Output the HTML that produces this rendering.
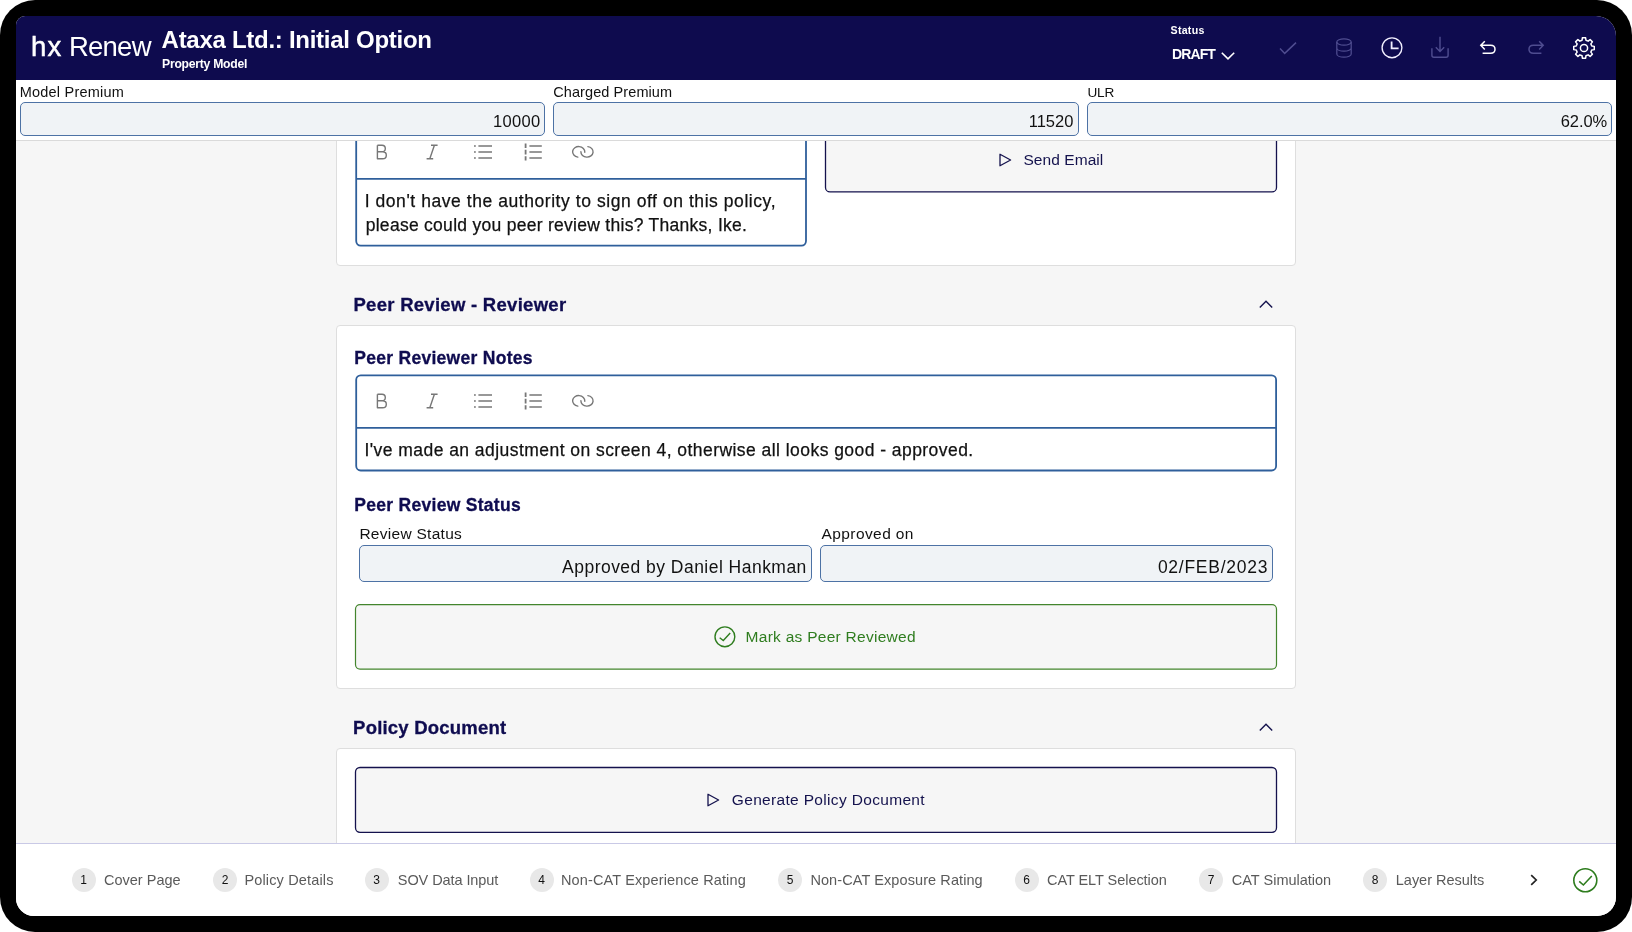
<!DOCTYPE html>
<html lang="en">
<head>
<meta charset="utf-8">
<title>hx Renew - Ataxa Ltd.: Initial Option</title>
<style>
*{box-sizing:border-box;margin:0;padding:0}
html,body{width:1632px;height:932px;overflow:hidden;background:#fff}
body{font-family:"Liberation Sans",sans-serif;color:#000;position:relative}
.frame{position:absolute;left:0;top:0;width:1632px;height:932px;background:#000;border-radius:35px}
.screen{position:absolute;left:16px;top:16px;width:1600px;height:900px;background:#f6f6f6;border-radius:9px 20px 19px 18px;overflow:hidden;will-change:transform}
.t{position:absolute;white-space:nowrap;line-height:1}
.os{-webkit-text-stroke:0.25px #111}
.lg{-webkit-text-stroke:0.5px #fff}
.hb{-webkit-text-stroke:0.3px #0f0c50}
.b{font-weight:bold}
.hdr{position:absolute;left:0;top:0;width:1600px;height:64px;background:#0e0b4e}
.prem{position:absolute;left:0;top:64px;width:1600px;height:61px;background:#fff;border-bottom:1px solid #dadada}
.inp{position:absolute;border:1px solid #4d72a5;border-radius:5px;background:#f0f3f6}
.card{position:absolute;left:320px;width:960px;background:#fff;border:1px solid #dedede;border-radius:4px}
.foot{position:absolute;left:0;top:827px;width:1600px;height:73px;background:#fff;border-top:1px solid #c9c9e6}
.st{position:absolute;top:852px;width:24px;height:24px;border-radius:12px;background:#e8e8e8}
.sn{position:absolute;width:24px;text-align:center;font-size:12px;line-height:1;color:#111;top:858px;white-space:nowrap}
svg{position:absolute;overflow:visible}
</style>
</head>
<body>
<div class="frame"></div>
<div class="screen">

<!-- content cards -->
<div class="card" style="top:60px;height:190px"></div>
<div class="card" style="top:309px;height:364px"></div>
<div class="card" style="top:732px;height:160px"></div>

<!-- editor 1 -->
<svg style="left:338px;top:108px" width="455" height="125" viewBox="0 0 455 125" fill="none"><rect x="2.20" y="2.40" width="449.80" height="119.20" rx="4.5" ry="4.5" stroke="#2f5f9b" stroke-width="1.8" fill="#fff"/><path d="M2.20 54.90H452.00" stroke="#2f5f9b" stroke-width="1.8"/></svg>
<svg style="left:360.0px;top:128.0px" width="12" height="16" viewBox="0 0 12 16" fill="none"><path d="M1.4 1.2V14.8H6.6C9 14.8 10.3 13.3 10.3 11.2C10.3 9.2 9 7.8 6.6 7.8H1.4M1.4 1.2H6C8 1.2 9.3 2.4 9.3 4.4C9.3 6.4 8 7.8 6 7.8" stroke="#777" stroke-width="1.4" stroke-linejoin="round"/></svg>
<svg style="left:410.0px;top:128.0px" width="12" height="16" viewBox="0 0 12 16" fill="none"><path d="M5 1.3H11.6M0.6 14.7H7.2M8.4 1.3L3.8 14.7" stroke="#777" stroke-width="1.4"/></svg>
<svg style="left:457.7px;top:128.0px" width="18" height="16" viewBox="0 0 18 16" fill="none"><path d="M4.4 2H18M4.4 8H18M4.4 14H18" stroke="#777" stroke-width="1.4"/><path d="M0 2H1.8M0 8H1.8M0 14H1.8" stroke="#777" stroke-width="1.4"/></svg>
<svg style="left:508.0px;top:127.0px" width="18" height="18" viewBox="0 0 18 18" fill="none"><path d="M5.4 3H17.8M5.4 9H17.8M5.4 15H17.8" stroke="#777" stroke-width="1.4"/><path d="M1.6 0.4V17.6" stroke="#777" stroke-width="1.8" stroke-dasharray="4.6 1.8"/></svg>
<svg style="left:556.0px;top:129.0px" width="22" height="14" viewBox="0 0 22 14" fill="none"><path d="M5.8 12.1A6.1 5.3 0 1 1 12.8 7.2M15.9 1.6A6.1 5.3 0 1 1 8.9 6.7" stroke="#777" stroke-width="1.4" stroke-linecap="round"/></svg>
<div class="t os" id="e1a" style="left:348.7px;top:177px;font-size:17.5px;color:#111;letter-spacing:0.56px">I don&#x27;t have the authority to sign off on this policy,</div>
<div class="t os" id="e1b" style="left:349.7px;top:201px;font-size:17.5px;color:#111;letter-spacing:0.28px">please could you peer review this? Thanks, Ike.</div>

<!-- send email -->
<svg style="left:807px;top:109px" width="457" height="70" viewBox="0 0 457 70" fill="none"><rect x="2.50" y="2.30" width="451.00" height="64.60" rx="4.5" ry="4.5" stroke="#14124d" stroke-width="1.3" fill="#f6f6f6"/></svg>
<svg style="left:983.0px;top:137.0px" width="13" height="14" viewBox="0 0 13 14" fill="none"><path d="M1 1.2V12.8L11.6 7Z" stroke="#14124d" stroke-width="1.3" stroke-linejoin="round"/></svg>
<div class="t" id="send" style="left:1007.4px;top:136px;font-size:15.5px;color:#14124d;letter-spacing:0.07px">Send Email</div>

<!-- section: peer review reviewer -->
<div class="t b hb" id="h1" style="left:337.5px;top:280px;font-size:18.5px;color:#0f0c50;letter-spacing:0.28px">Peer Review - Reviewer</div>
<svg style="left:1243.0px;top:284.0px" width="14" height="8" viewBox="0 0 14 8" fill="none"><path d="M0.8 7.4L7 1.2L13.2 7.4" stroke="#14124d" stroke-width="1.4"/></svg>
<div class="t b hb" id="h2" style="left:338.3px;top:334px;font-size:17.5px;color:#0f0c50;letter-spacing:0.28px">Peer Reviewer Notes</div>
<svg style="left:338px;top:357px" width="926" height="101" viewBox="0 0 926 101" fill="none"><rect x="2.20" y="2.30" width="919.90" height="95.20" rx="4.5" ry="4.5" stroke="#2f5f9b" stroke-width="1.8" fill="#fff"/><path d="M2.20 54.80H922.10" stroke="#2f5f9b" stroke-width="1.8"/></svg>
<svg style="left:360.0px;top:377.0px" width="12" height="16" viewBox="0 0 12 16" fill="none"><path d="M1.4 1.2V14.8H6.6C9 14.8 10.3 13.3 10.3 11.2C10.3 9.2 9 7.8 6.6 7.8H1.4M1.4 1.2H6C8 1.2 9.3 2.4 9.3 4.4C9.3 6.4 8 7.8 6 7.8" stroke="#777" stroke-width="1.4" stroke-linejoin="round"/></svg>
<svg style="left:410.0px;top:377.0px" width="12" height="16" viewBox="0 0 12 16" fill="none"><path d="M5 1.3H11.6M0.6 14.7H7.2M8.4 1.3L3.8 14.7" stroke="#777" stroke-width="1.4"/></svg>
<svg style="left:457.7px;top:377.0px" width="18" height="16" viewBox="0 0 18 16" fill="none"><path d="M4.4 2H18M4.4 8H18M4.4 14H18" stroke="#777" stroke-width="1.4"/><path d="M0 2H1.8M0 8H1.8M0 14H1.8" stroke="#777" stroke-width="1.4"/></svg>
<svg style="left:508.0px;top:376.0px" width="18" height="18" viewBox="0 0 18 18" fill="none"><path d="M5.4 3H17.8M5.4 9H17.8M5.4 15H17.8" stroke="#777" stroke-width="1.4"/><path d="M1.6 0.4V17.6" stroke="#777" stroke-width="1.8" stroke-dasharray="4.6 1.8"/></svg>
<svg style="left:556.0px;top:378.0px" width="22" height="14" viewBox="0 0 22 14" fill="none"><path d="M5.8 12.1A6.1 5.3 0 1 1 12.8 7.2M15.9 1.6A6.1 5.3 0 1 1 8.9 6.7" stroke="#777" stroke-width="1.4" stroke-linecap="round"/></svg>
<div class="t os" id="e2" style="left:348.5px;top:426px;font-size:17.5px;color:#111;letter-spacing:0.45px">I&#x27;ve made an adjustment on screen 4, otherwise all looks good - approved.</div>
<div class="t b hb" id="h3" style="left:338.3px;top:481px;font-size:17.5px;color:#0f0c50;letter-spacing:0.29px">Peer Review Status</div>
<div class="t" id="l4" style="left:343.4px;top:510px;font-size:15.5px;color:#111;letter-spacing:0.28px">Review Status</div>
<div class="t" id="l5" style="left:805.6px;top:510px;font-size:15.5px;color:#111;letter-spacing:0.40px">Approved on</div>
<div class="inp" style="left:343.0px;top:529.0px;width:453.0px;height:37.0px"></div>
<div class="inp" style="left:804.0px;top:529.0px;width:453.0px;height:37.0px"></div>
<div class="t" id="v4" style="left:546.1px;top:543px;font-size:17.5px;color:#111;letter-spacing:0.47px">Approved by Daniel Hankman</div>
<div class="t" id="v5" style="left:1141.9px;top:543px;font-size:17.5px;color:#111;letter-spacing:0.74px">02/FEB/2023</div>
<svg style="left:337px;top:586px" width="927" height="71" viewBox="0 0 927 71" fill="none"><rect x="2.50" y="2.60" width="921.00" height="64.50" rx="4.5" ry="4.5" stroke="#43852d" stroke-width="1.2" fill="#f6f6f6"/></svg>
<svg style="left:698.2px;top:610px" width="22" height="22" viewBox="0 0 22 22" fill="none"><circle cx="10.9" cy="10.8" r="9.9" stroke="#2f7d1f" stroke-width="1.4"/><path d="M5.7 11.8L9.3 14.5L16.2 7" stroke="#2f7d1f" stroke-width="1.4"/></svg>
<div class="t" id="mark" style="left:729.6px;top:613px;font-size:15.5px;color:#2f7d1f;letter-spacing:0.27px">Mark as Peer Reviewed</div>

<!-- section: policy document -->
<div class="t b hb" id="h4" style="left:337.1px;top:703px;font-size:18.5px;color:#0f0c50;letter-spacing:0.21px">Policy Document</div>
<svg style="left:1243.0px;top:707.0px" width="14" height="8" viewBox="0 0 14 8" fill="none"><path d="M0.8 7.4L7 1.2L13.2 7.4" stroke="#14124d" stroke-width="1.4"/></svg>
<svg style="left:337px;top:749px" width="927" height="71" viewBox="0 0 927 71" fill="none"><rect x="2.50" y="2.50" width="921.00" height="64.80" rx="4.5" ry="4.5" stroke="#14124d" stroke-width="1.3" fill="#f6f6f6"/></svg>
<svg style="left:691.0px;top:777.0px" width="13" height="14" viewBox="0 0 13 14" fill="none"><path d="M1 1.2V12.8L11.6 7Z" stroke="#14124d" stroke-width="1.3" stroke-linejoin="round"/></svg>
<div class="t" id="gen" style="left:715.8px;top:776px;font-size:15.5px;color:#14124d;letter-spacing:0.33px">Generate Policy Document</div>

<!-- PREMIUM ROW -->
<div class="prem"></div>
<div class="t" id="l1" style="left:3.8px;top:69px;font-size:14.5px;color:#111;letter-spacing:0.20px">Model Premium</div>
<div class="t" id="l2" style="left:537.2px;top:69px;font-size:14.5px;color:#111;letter-spacing:0.09px">Charged Premium</div>
<div class="t" id="l3" style="left:1071.5px;top:70px;font-size:13.6px;color:#111;letter-spacing:-0.25px">ULR</div>
<div class="inp" style="left:4.0px;top:86.0px;width:525.0px;height:34.0px"></div>
<div class="inp" style="left:537.0px;top:86.0px;width:526.0px;height:34.0px"></div>
<div class="inp" style="left:1071.0px;top:86.0px;width:525.0px;height:34.0px"></div>
<div class="t" id="v1" style="left:476.9px;top:97px;font-size:16.5px;color:#111;letter-spacing:0.35px">10000</div>
<div class="t" id="v2" style="left:1012.7px;top:97px;font-size:16.5px;color:#111;letter-spacing:0.00px">11520</div>
<div class="t" id="v3" style="left:1544.7px;top:97px;font-size:16.5px;color:#111;letter-spacing:-0.05px">62.0%</div>

<!-- HEADER -->
<div class="hdr"></div>
<div class="t lg" id="logo" style="left:15.1px;top:17px;font-size:27.5px;color:#fff;letter-spacing:1.20px">hx</div>
<div class="t" id="logo2" style="left:52.9px;top:17px;font-size:27.5px;color:#fff;letter-spacing:-0.75px">Renew</div>
<div class="t b" id="title" style="left:145.6px;top:12px;font-size:24px;color:#fff;letter-spacing:-0.28px">Ataxa Ltd.: Initial Option</div>
<div class="t b" id="sub" style="left:146.1px;top:42px;font-size:12.2px;color:#fff;letter-spacing:-0.27px">Property Model</div>
<div class="t b" id="status" style="left:1154.6px;top:9px;font-size:10.6px;color:#fff;letter-spacing:0.26px">Status</div>
<div class="t b" id="draft" style="left:1156.0px;top:31px;font-size:14px;color:#fff;letter-spacing:-0.90px">DRAFT</div>
<svg style="left:1205.0px;top:36.0px" width="14" height="8" viewBox="0 0 14 8" fill="none"><path d="M0.8 0.8L7 6.8L13.2 0.8" stroke="#fff" stroke-width="1.6"/></svg>
<svg style="left:1263.0px;top:25.0px" width="18" height="14" viewBox="0 0 18 14" fill="none"><path d="M1 7.6L5.7 12.4L17 1.6" stroke="#4f4d90" stroke-width="1.5"/></svg>
<svg style="left:1320.0px;top:22.0px" width="16" height="20" viewBox="0 0 16 20" fill="none"><ellipse cx="8" cy="4" rx="7.2" ry="3.2" stroke="#4f4d90" stroke-width="1.25"/><path d="M0.8 4V16C0.8 17.8 4 19.2 8 19.2C12 19.2 15.2 17.8 15.2 16V4M0.8 10C0.8 11.8 4 13.2 8 13.2C12 13.2 15.2 11.8 15.2 10" stroke="#4f4d90" stroke-width="1.25"/></svg>
<svg style="left:1365.0px;top:21.0px" width="22" height="22" viewBox="0 0 22 22" fill="none"><circle cx="11" cy="10.8" r="9.9" stroke="#f2f0ff" stroke-width="1.35"/><path d="M10.6 4.4V11.3H17.6" stroke="#f2f0ff" stroke-width="1.8"/></svg>
<svg style="left:1415.0px;top:20.0px" width="18" height="22" viewBox="0 0 18 22" fill="none"><path d="M0.9 12.2V19.2Q0.9 21.2 2.9 21.2H15.1Q17.1 21.2 17.1 19.2V12.2M9 0.7V15.4M4.8 11.2L9 15.4L13.2 11.2" stroke="#4f4d90" stroke-width="1.4"/></svg>
<svg style="left:1463.0px;top:24.4px" width="18" height="14" viewBox="0 0 18 14" fill="none"><path d="M5.8 1.2L1.8 5.3L5.8 9.4M1.8 5.3H11.6C14.2 5.3 16 7 16 9.3C16 11.6 14.2 13.3 11.6 13.3H3.6" stroke="#fff" stroke-width="1.5"/></svg>
<svg style="left:1511.0px;top:24.4px" width="18" height="14" viewBox="0 0 18 14" fill="none"><path d="M12.2 1.2L16.2 5.3L12.2 9.4M16.2 5.3H6.4C3.8 5.3 2 7 2 9.3C2 11.6 3.8 13.3 6.4 13.3H14.4" stroke="#4f4d90" stroke-width="1.5"/></svg>
<svg style="left:1556.0px;top:20.0px" width="24" height="24" viewBox="0 0 24 24" fill="none"><path d="M10.07 4.24L10.37 1.73L13.63 1.73L13.93 4.24L16.13 5.15L18.11 3.59L20.41 5.89L18.85 7.87L19.76 10.07L22.27 10.37L22.27 13.63L19.76 13.93L18.85 16.13L20.41 18.11L18.11 20.41L16.13 18.85L13.93 19.76L13.63 22.27L10.37 22.27L10.07 19.76L7.87 18.85L5.89 20.41L3.59 18.11L5.15 16.13L4.24 13.93L1.73 13.63L1.73 10.37L4.24 10.07L5.15 7.87L3.59 5.89L5.89 3.59L7.87 5.15Z" stroke="#fff" stroke-width="1.5" stroke-linejoin="round"/><circle cx="12" cy="12" r="3.6" stroke="#fff" stroke-width="1.5"/></svg>

<!-- FOOTER -->
<div class="foot"></div>
<div class="st" style="left:55.7px"></div><div class="sn" style="left:55.7px">1</div>
<div class="st" style="left:197.0px"></div><div class="sn" style="left:197.0px">2</div>
<div class="st" style="left:348.7px"></div><div class="sn" style="left:348.7px">3</div>
<div class="st" style="left:513.7px"></div><div class="sn" style="left:513.7px">4</div>
<div class="st" style="left:762.0px"></div><div class="sn" style="left:762.0px">5</div>
<div class="st" style="left:998.7px"></div><div class="sn" style="left:998.7px">6</div>
<div class="st" style="left:1183.0px"></div><div class="sn" style="left:1183.0px">7</div>
<div class="st" style="left:1347.0px"></div><div class="sn" style="left:1347.0px">8</div>

<div class="t" id="s1" style="left:88.0px;top:857px;font-size:14.5px;color:#5a5a5a;letter-spacing:0.00px">Cover Page</div>
<div class="t" id="s2" style="left:228.4px;top:857px;font-size:14.5px;color:#5a5a5a;letter-spacing:0.16px">Policy Details</div>
<div class="t" id="s3" style="left:381.8px;top:857px;font-size:14.5px;color:#5a5a5a;letter-spacing:-0.08px">SOV Data Input</div>
<div class="t" id="s4" style="left:545.0px;top:857px;font-size:14.5px;color:#5a5a5a;letter-spacing:0.13px">Non-CAT Experience Rating</div>
<div class="t" id="s5" style="left:794.4px;top:857px;font-size:14.5px;color:#5a5a5a;letter-spacing:0.09px">Non-CAT Exposure Rating</div>
<div class="t" id="s6" style="left:1031.0px;top:857px;font-size:14.5px;color:#5a5a5a;letter-spacing:-0.05px">CAT ELT Selection</div>
<div class="t" id="s7" style="left:1215.8px;top:857px;font-size:14.5px;color:#5a5a5a;letter-spacing:0.00px">CAT Simulation</div>
<div class="t" id="s8" style="left:1379.8px;top:857px;font-size:14.5px;color:#5a5a5a;letter-spacing:-0.02px">Layer Results</div>
<svg style="left:1514px;top:858px" width="8" height="12" viewBox="0 0 8 12" fill="none"><path d="M1.2 1.2L6.2 6L1.2 10.8" stroke="#222" stroke-width="1.7"/></svg>
<svg style="left:1556.5px;top:851.5px" width="25" height="25" viewBox="0 0 25 25" fill="none"><circle cx="12.3" cy="12.2" r="11.5" stroke="#2f7d1f" stroke-width="1.6"/><path d="M6.2 13.3L10.4 17L18.8 8" stroke="#2f7d1f" stroke-width="1.6"/></svg>

</div>
</body>
</html>
